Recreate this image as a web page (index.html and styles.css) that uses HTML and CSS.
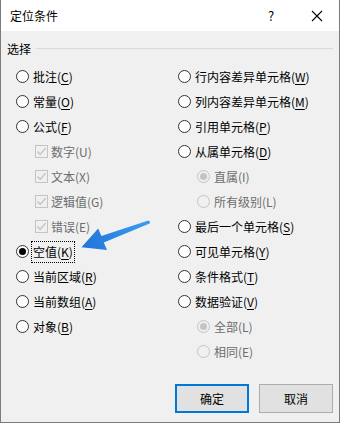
FILE: index.html
```html
<!DOCTYPE html>
<html lang="zh-CN">
<head>
<meta charset="utf-8">
<title>定位条件</title>
<link rel="stylesheet" href="styles.css">
</head>
<body>
<div class="window">
  <div class="titlebar">
    <span class="title">定位条件</span>
    <span class="help">?</span>
    <span class="close">
      <svg width="12" height="12" viewBox="0 0 12 12"><path d="M1 1 L11 11 M11 1 L1 11" stroke="#000" stroke-width="1.1" fill="none"/></svg>
    </span>
  </div>
  <div class="body">
    <div class="group-head"><span class="group-label">选择</span><span class="rule"></span></div>
    <div class="cols">
      <div class="col">
        <div class="row"><span class="radio"></span><span class="label">批注(<u>C</u>)</span></div>
        <div class="row"><span class="radio"></span><span class="label">常量(<u>O</u>)</span></div>
        <div class="row"><span class="radio"></span><span class="label">公式(<u>F</u>)</span></div>
        <div class="row sub disabled"><span class="check"><svg width="11" height="11" viewBox="0 0 11 11"><path d="M1.5 5.5 L4.2 8.3 L9.6 2.2" stroke="#bdbdbd" stroke-width="1.2" fill="none"/></svg></span><span class="label">数字(U)</span></div>
        <div class="row sub disabled"><span class="check"><svg width="11" height="11" viewBox="0 0 11 11"><path d="M1.5 5.5 L4.2 8.3 L9.6 2.2" stroke="#bdbdbd" stroke-width="1.2" fill="none"/></svg></span><span class="label">文本(X)</span></div>
        <div class="row sub disabled"><span class="check"><svg width="11" height="11" viewBox="0 0 11 11"><path d="M1.5 5.5 L4.2 8.3 L9.6 2.2" stroke="#bdbdbd" stroke-width="1.2" fill="none"/></svg></span><span class="label">逻辑值(G)</span></div>
        <div class="row sub disabled"><span class="check"><svg width="11" height="11" viewBox="0 0 11 11"><path d="M1.5 5.5 L4.2 8.3 L9.6 2.2" stroke="#bdbdbd" stroke-width="1.2" fill="none"/></svg></span><span class="label">错误(E)</span></div>
        <div class="row"><span class="radio checked"></span><span class="label focus">空值(<u>K</u>)</span></div>
        <div class="row"><span class="radio"></span><span class="label">当前区域(<u>R</u>)</span></div>
        <div class="row"><span class="radio"></span><span class="label">当前数组(<u>A</u>)</span></div>
        <div class="row"><span class="radio"></span><span class="label">对象(<u>B</u>)</span></div>
      </div>
      <div class="col">
        <div class="row"><span class="radio"></span><span class="label">行内容差异单元格(<u>W</u>)</span></div>
        <div class="row"><span class="radio"></span><span class="label">列内容差异单元格(<u>M</u>)</span></div>
        <div class="row"><span class="radio"></span><span class="label">引用单元格(<u>P</u>)</span></div>
        <div class="row"><span class="radio"></span><span class="label">从属单元格(<u>D</u>)</span></div>
        <div class="row sub disabled"><span class="radio checked"></span><span class="label">直属(I)</span></div>
        <div class="row sub disabled"><span class="radio"></span><span class="label">所有级别(L)</span></div>
        <div class="row"><span class="radio"></span><span class="label">最后一个单元格(<u>S</u>)</span></div>
        <div class="row"><span class="radio"></span><span class="label">可见单元格(<u>Y</u>)</span></div>
        <div class="row"><span class="radio"></span><span class="label">条件格式(<u>T</u>)</span></div>
        <div class="row"><span class="radio"></span><span class="label">数据验证(<u>V</u>)</span></div>
        <div class="row sub disabled"><span class="radio checked"></span><span class="label">全部(L)</span></div>
        <div class="row sub disabled"><span class="radio"></span><span class="label">相同(E)</span></div>
      </div>
    </div>
    <div class="buttons">
      <span class="btn default">确定</span>
      <span class="btn">取消</span>
    </div>
  </div>
  <svg class="arrow" width="340" height="423" viewBox="0 0 340 423">
    <defs>
      <linearGradient id="ag" x1="149" y1="222" x2="82" y2="247" gradientUnits="userSpaceOnUse">
        <stop offset="0" stop-color="#3d9cf0"/>
        <stop offset="1" stop-color="#1f74d9"/>
      </linearGradient>
    </defs>
    <path d="M148.4 220.5 L101.4 236 L98.2 228.6 L81.5 247.2 L107 250 L103.8 242.6 L149.6 223.5 Q151 222 148.4 220.5 Z" fill="url(#ag)"/>
  </svg>
</div>
</body>
</html>
```
FILE: styles.css
```css
* { box-sizing: border-box; }
html, body { margin: 0; padding: 0; background: #f0f0f0; }
body {
  font-family: "Noto Sans CJK SC", "Noto Sans", sans-serif;
  font-size: 12px;
  color: #000;
}
.window {
  position: relative;
  width: 340px;
  height: 423px;
  border-left: 1px solid #7b7b7b;
  border-right: 1px solid #7b7b7b;
  border-bottom: 1px solid #7b7b7b;
  display: flex;
  flex-direction: column;
  background: #f0f0f0;
}
.titlebar {
  height: 31px;
  background: #fff;
  display: flex;
  align-items: center;
  flex: none;
}
.title { margin-left: 9px; flex: 1; font-size: 12px; }
.help { width: 12px; margin-right: 34px; text-align: center; font-size: 13px; }
.close { width: 12px; height: 12px; margin-right: 16px; display: flex; }
.body {
  flex: 1;
  display: flex;
  flex-direction: column;
  padding: 8px 6px 9px 6px;
}
.group-head {
  height: 18px;
  display: flex;
  align-items: center;
  gap: 5px;
}
.rule { flex: 1; height: 1px; background: #d9d9d9; margin-right: 0; }
.cols {
  display: grid;
  grid-template-columns: 162px 1fr;
  padding-left: 9px;
  margin-top: 7px;
}
.row {
  height: 25px;
  display: flex;
  align-items: center;
  gap: 4px;
}
.row.sub { padding-left: 19px; }
.row.sub .check + .label { margin-left: -1px; }
.radio {
  width: 13px;
  height: 13px;
  border-radius: 50%;
  border: 1px solid #333;
  background: #fff;
  flex: none;
  display: flex;
  align-items: center;
  justify-content: center;
}
.radio.checked::after {
  content: "";
  width: 7px;
  height: 7px;
  border-radius: 50%;
  background: #000;
}
.disabled .radio { border-color: #c4c4c4; background: #f0f0f0; }
.disabled .radio.checked::after { background: #c4c4c4; }
.check {
  width: 13px;
  height: 13px;
  border: 1px solid #c4c4c4;
  background: #f0f0f0;
  flex: none;
  display: flex;
  align-items: center;
  justify-content: center;
}
.label { white-space: nowrap; line-height: 20px; }
.label u { text-decoration: underline; text-underline-offset: 2px; }
.disabled .label { color: #6d6d6d; }
.focus {
  border: 1px dotted #000;
  margin-left: -2px;
  padding: 0 1px;
  line-height: 20px;
}
.buttons {
  margin-top: auto;
  display: flex;
  justify-content: flex-end;
  gap: 10px;
  padding-right: 0;
}
.btn {
  width: 74px;
  height: 29px;
  background: #e1e1e1;
  border: 1px solid #adadad;
  display: flex;
  align-items: center;
  justify-content: center;
}
.btn.default { border: 2px solid #0078d7; }
.arrow { position: absolute; left: -1px; top: 0; pointer-events: none; }
```
